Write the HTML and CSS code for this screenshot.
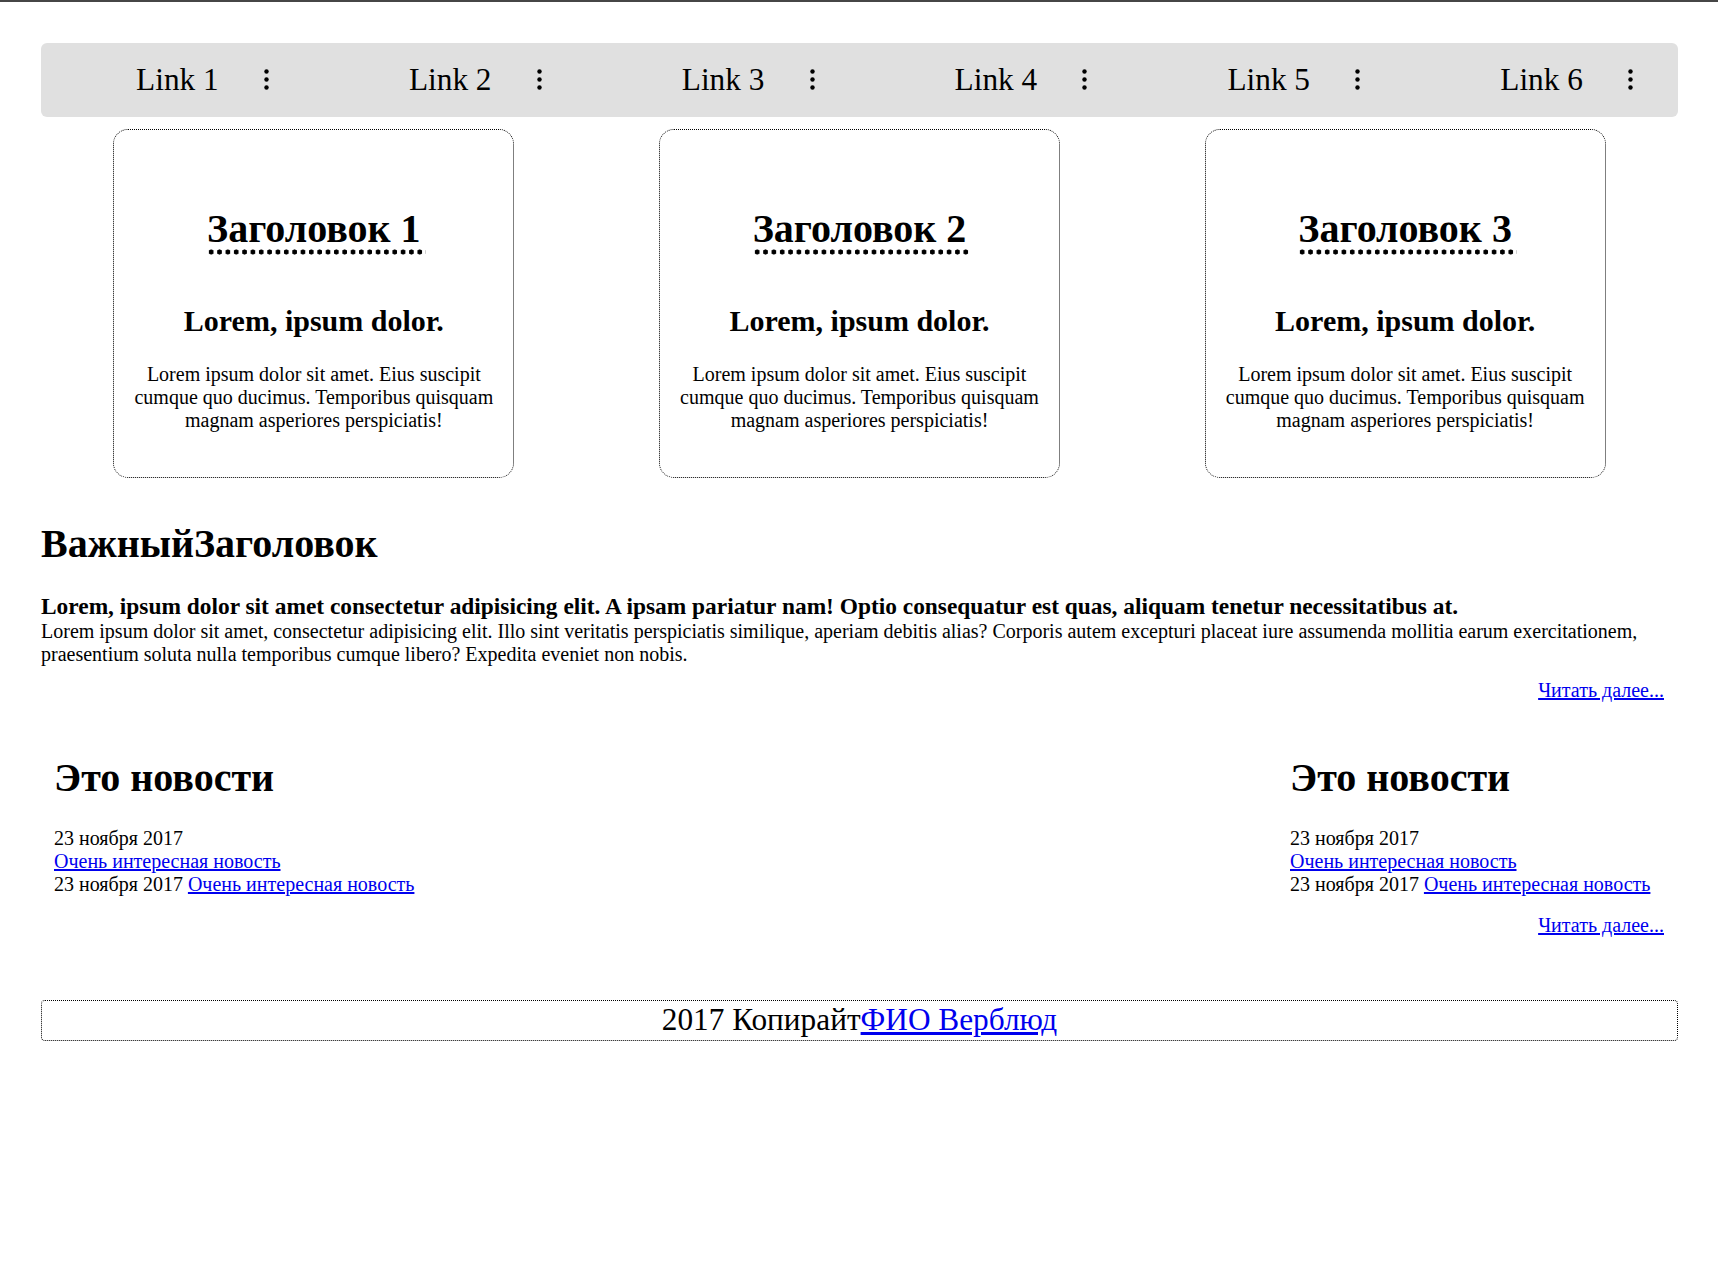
FILE: index.html
```html
<!DOCTYPE html>
<html lang="ru">
<head>
<meta charset="utf-8">
<title>Page</title>
<link rel="stylesheet" href="styles.css">
</head>
<body>
<div class="topline"></div>
<div class="wrapper">
  <nav class="nav">
    <div class="nav-item"><a class="nav-link">Link 1</a><span class="nav-dots"><svg width="5" height="21" viewBox="0 0 5 21"><circle cx="2.5" cy="2.5" r="2.2"/><circle cx="2.5" cy="10.5" r="2.2"/><circle cx="2.5" cy="18.5" r="2.2"/></svg></span></div>
    <div class="nav-item"><a class="nav-link">Link 2</a><span class="nav-dots"><svg width="5" height="21" viewBox="0 0 5 21"><circle cx="2.5" cy="2.5" r="2.2"/><circle cx="2.5" cy="10.5" r="2.2"/><circle cx="2.5" cy="18.5" r="2.2"/></svg></span></div>
    <div class="nav-item"><a class="nav-link">Link 3</a><span class="nav-dots"><svg width="5" height="21" viewBox="0 0 5 21"><circle cx="2.5" cy="2.5" r="2.2"/><circle cx="2.5" cy="10.5" r="2.2"/><circle cx="2.5" cy="18.5" r="2.2"/></svg></span></div>
    <div class="nav-item"><a class="nav-link">Link 4</a><span class="nav-dots"><svg width="5" height="21" viewBox="0 0 5 21"><circle cx="2.5" cy="2.5" r="2.2"/><circle cx="2.5" cy="10.5" r="2.2"/><circle cx="2.5" cy="18.5" r="2.2"/></svg></span></div>
    <div class="nav-item"><a class="nav-link">Link 5</a><span class="nav-dots"><svg width="5" height="21" viewBox="0 0 5 21"><circle cx="2.5" cy="2.5" r="2.2"/><circle cx="2.5" cy="10.5" r="2.2"/><circle cx="2.5" cy="18.5" r="2.2"/></svg></span></div>
    <div class="nav-item"><a class="nav-link">Link 6</a><span class="nav-dots"><svg width="5" height="21" viewBox="0 0 5 21"><circle cx="2.5" cy="2.5" r="2.2"/><circle cx="2.5" cy="10.5" r="2.2"/><circle cx="2.5" cy="18.5" r="2.2"/></svg></span></div>
  </nav>

  <section class="cards">
    <div class="card">
      <h1 class="card-title"><span class="card-title-text">Заголовок 1</span></h1>
      <h2 class="card-sub">Lorem, ipsum dolor.</h2>
      <p class="card-text">Lorem ipsum dolor sit amet. Eius suscipit cumque quo ducimus. Temporibus quisquam magnam asperiores perspiciatis!</p>
    </div>
    <div class="card">
      <h1 class="card-title"><span class="card-title-text">Заголовок 2</span></h1>
      <h2 class="card-sub">Lorem, ipsum dolor.</h2>
      <p class="card-text">Lorem ipsum dolor sit amet. Eius suscipit cumque quo ducimus. Temporibus quisquam magnam asperiores perspiciatis!</p>
    </div>
    <div class="card">
      <h1 class="card-title"><span class="card-title-text">Заголовок 3</span></h1>
      <h2 class="card-sub">Lorem, ipsum dolor.</h2>
      <p class="card-text">Lorem ipsum dolor sit amet. Eius suscipit cumque quo ducimus. Temporibus quisquam magnam asperiores perspiciatis!</p>
    </div>
  </section>

  <section class="article">
    <h1 class="article-title">ВажныйЗаголовок</h1>
    <strong class="article-lead">Lorem, ipsum dolor sit amet consectetur adipisicing elit. A ipsam pariatur nam! Optio consequatur est quas, aliquam tenetur necessitatibus at.</strong>
    <p class="article-text">Lorem ipsum dolor sit amet, consectetur adipisicing elit. Illo sint veritatis perspiciatis similique, aperiam debitis alias? Corporis autem excepturi placeat iure assumenda mollitia earum exercitationem, praesentium soluta nulla temporibus cumque libero? Expedita eveniet non nobis.</p>
    <div class="more"><a href="#">Читать далее...</a></div>
  </section>

  <section class="news">
    <div class="news-col">
      <h1 class="news-title">Это новости</h1>
      <div class="news-list">
        <div>23 ноября 2017</div>
        <div><a href="#">Очень интересная новость</a></div>
        <div>23 ноября 2017 <a href="#">Очень интересная новость</a></div>
      </div>
    </div>
    <div class="news-col news-col-right">
      <h1 class="news-title">Это новости</h1>
      <div class="news-list">
        <div>23 ноября 2017</div>
        <div><a href="#">Очень интересная новость</a></div>
        <div>23 ноября 2017 <a href="#">Очень интересная новость</a></div>
      </div>
      <div class="news-more"><a href="#">Читать далее...</a></div>
    </div>
  </section>

  <footer class="footer">2017 Копирайт<a href="#">ФИО Верблюд</a></footer>
</div>
</body>
</html>
```

FILE: styles.css
```css
html, body {
  margin: 0;
  padding: 0;
  background: #ffffff;
}

body {
  font-family: "Liberation Serif", "Times New Roman", serif;
  font-size: 20px;
  color: #000000;
}

a {
  color: #0000ee;
  text-decoration: underline;
}

.topline {
  height: 2px;
  background: #464646;
}

.wrapper {
  margin: 0 40px 0 41px;
  padding-top: 41px;
}

/* NAV */
.nav {
  display: grid;
  grid-template-columns: repeat(6, 1fr);
  height: 74px;
  background: #e0e0e0;
  border-radius: 6px;
}

.nav-item {
  display: grid;
  grid-template-columns: 1fr auto 1fr;
  align-items: center;
}

.nav-link {
  grid-column: 2;
  font-family: "Liberation Serif", "Times New Roman", serif;
  font-size: 31.3px;
  color: #000000;
  text-decoration: none;
}

.nav-dots {
  grid-column: 3;
  justify-self: end;
  margin-right: 45px;
  display: flex;
  margin-top: -1px;
}

.nav-dots svg {
  fill: #000000;
}

/* CARDS */
.cards {
  display: flex;
  justify-content: space-around;
  margin-top: 12px;
}

.card {
  box-sizing: border-box;
  width: 401px;
  height: 349px;
  border: 1px dotted #000000;
  border-radius: 15px;
  padding: 48px 10px 0;
  display: flex;
  flex-direction: column;
  text-align: center;
}

.card-title {
  font-size: 40px;
  font-weight: bold;
  margin: 27px 0 24px;
}

.card-title-text {
  display: inline-block;
  padding: 0 5px 3px 0;
  margin-right: -5px;
  background-image: radial-gradient(circle, #000000 2.3px, rgba(0, 0, 0, 0) 2.8px);
  background-size: 8.35px 6px;
  background-repeat: repeat-x;
  background-position: 0 100%;
}

.card-sub {
  font-size: 30px;
  font-weight: bold;
  margin: 25px 0 25px;
}

.card-text {
  margin: 0;
  font-size: 20px;
}

/* ARTICLE */
.article {
  padding-top: 42px;
}

.article-title {
  font-size: 40px;
  font-weight: bold;
  margin: 0 0 27px;
}

.article-lead {
  display: block;
  font-size: 23.4px;
  font-weight: bold;
  margin-top: -1px;
}

.article-text {
  margin: 0;
}

.more {
  margin-top: 13px;
  text-align: right;
  padding-right: 14px;
}

/* NEWS */
.news {
  display: flex;
  justify-content: space-between;
  padding: 52px 14px 0 13px;
}

.news-col-right {
  width: 374px;
}

.news-title {
  font-size: 40px;
  font-weight: bold;
  margin: 0 0 26px;
}

.news-more {
  margin-top: 18px;
  text-align: right;
}

/* FOOTER */
.footer {
  margin-top: 63px;
  border: 1px dotted #000000;
  border-radius: 4px;
  padding: 1px 0 2px;
  text-align: center;
  font-size: 31.3px;
}
```
